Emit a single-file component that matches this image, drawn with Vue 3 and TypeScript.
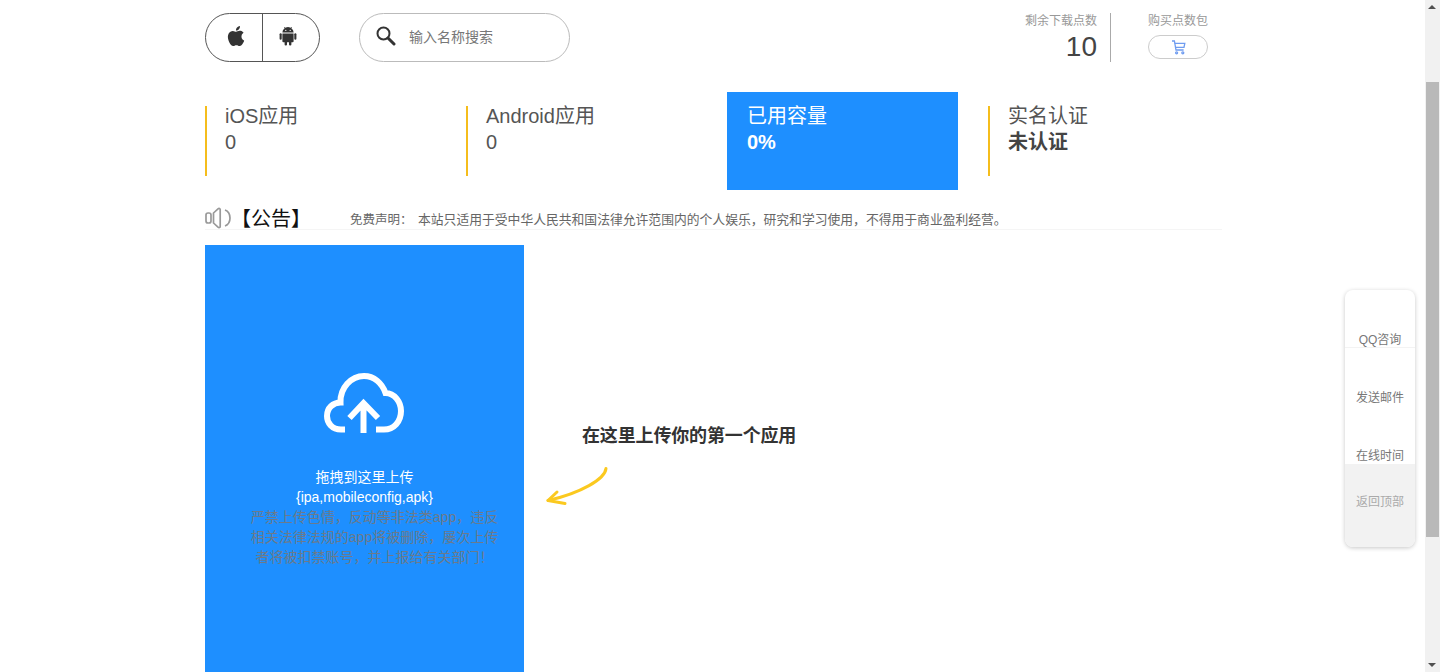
<script setup lang="ts">
interface Stat { title: string; value: string; active?: boolean; strong?: boolean }
const stats: Stat[] = [
  { title: 'iOS应用', value: '0' },
  { title: 'Android应用', value: '0' },
  { title: '已用容量', value: '0%', active: true, strong: true },
  { title: '实名认证', value: '未认证', strong: true },
]
</script>

<template>
  <div class="page">
    <main class="main">
      <div class="container">
        <header class="header">
          <div class="platforms">
            <button class="platform">
              <svg width="20" height="20" viewBox="0 0 24 24" fill="#333"><path d="M12.152 6.896c-.948 0-2.415-1.078-3.96-1.04-2.04.027-3.91 1.183-4.961 3.014-2.117 3.675-.546 9.103 1.519 12.09 1.013 1.454 2.208 3.09 3.792 3.039 1.52-.065 2.09-.987 3.935-.987 1.831 0 2.35.987 3.96.948 1.637-.026 2.676-1.48 3.676-2.948 1.156-1.688 1.636-3.325 1.662-3.415-.039-.013-3.182-1.221-3.22-4.857-.026-3.04 2.48-4.494 2.597-4.559-1.429-2.09-3.623-2.324-4.39-2.376-2-.156-3.675 1.09-4.61 1.09zM15.53 3.83c.843-1.012 1.4-2.427 1.245-3.83-1.207.052-2.662.805-3.532 1.818-.78.896-1.454 2.338-1.273 3.714 1.338.104 2.715-.688 3.559-1.701"/></svg>
            </button>
            <button class="platform platform-right">
              <svg width="18" height="20" viewBox="0 0 18 20" fill="#333">
                <path d="M3.4 6.6a5.6 5.6 0 0 1 11.2 0z"/>
                <path d="M5.4 1l1.2 2M12.6 1l-1.2 2" stroke="#333" stroke-width=".8"/>
                <circle cx="6.8" cy="4.4" r=".6" fill="#fff"/><circle cx="11.2" cy="4.4" r=".6" fill="#fff"/>
                <path d="M3.4 7.4h11.2v7.8a1 1 0 0 1-1 1H4.4a1 1 0 0 1-1-1z"/>
                <rect x="0.6" y="7.2" width="2.1" height="6.6" rx="1.05"/>
                <rect x="15.3" y="7.2" width="2.1" height="6.6" rx="1.05"/>
                <rect x="5.6" y="15" width="2.4" height="4.6" rx="1.1"/>
                <rect x="10" y="15" width="2.4" height="4.6" rx="1.1"/>
              </svg>
            </button>
          </div>
          <div class="search">
            <svg width="20" height="20" viewBox="0 0 20 20" fill="none" stroke="#333">
              <circle cx="7.500" cy="7.500" r="6" stroke-width="2"/>
              <path d="M12 12L18 18" stroke-width="3" stroke-linecap="round"/>
            </svg>
            <span class="search-text">输入名称搜索</span>
          </div>
          <div class="points">
            <span class="small-label">剩余下载点数</span>
            <span class="points-value">10</span>
          </div>
          <div class="buy">
            <span class="small-label">购买点数包</span>
            <button class="cart">
              <svg width="15" height="15" viewBox="0 0 15 15" fill="none" stroke="#6f9cf0" stroke-width="1.3">
                <path d="M1 1h2.400l1.600 9h7.600"/>
                <path d="M3.800 3.400h10l-.8 4H4.500"/>
                <circle cx="5.600" cy="12.800" r="1"/><circle cx="11.800" cy="12.800" r="1"/>
              </svg>
            </button>
          </div>
        </header>

        <section class="stats">
          <div v-for="s in stats" :key="s.title" class="stat" :class="{ active: s.active }">
            <div class="stat-body">
              <div class="stat-title">{{ s.title }}</div>
              <div class="stat-value" :class="{ strong: s.strong }">{{ s.value }}</div>
            </div>
          </div>
        </section>

        <section class="notice">
          <svg class="speaker" width="26" height="22" viewBox="0 0 26 22" fill="none" stroke="#999" stroke-width="1.700">
            <rect x="1" y="6" width="5" height="10" rx="2"/>
            <path d="M8.500 6L13 1.800c1-.8 2.200-.4 2.200.8v16.800c0 1.200-1.200 1.600-2.200.8L8.500 16z"/>
            <path d="M20 3c3.800 1.500 5 5 5 8s-1.200 6.500-5 8"/>
          </svg>
          <strong class="notice-title">【公告】</strong>
          <span class="notice-label">免费声明：</span>
          <span class="notice-text">本站只适用于受中华人民共和国法律允许范围内的个人娱乐，研究和学习使用，不得用于商业盈利经营。</span>
        </section>

        <section class="upload-row">
          <div class="upload">
            <svg class="cloud" width="80" height="60" viewBox="0 0 80 60" fill="none" stroke="#fff" stroke-width="6">
              <path d="M21 56.500H17C8 56.500 3 50 3 43 3 35 9 29.500 16.500 29.500 16 15 27 3 40 3 50 3 58 10 61.500 20 70.500 20 77 29 77 38 77 48.500 70 56.500 60 56.500H52"/>
              <path d="M39.500 60V29M25.500 45L39.500 30 54 45"/>
            </svg>
            <div class="upload-main">拖拽到这里上传</div>
            <div class="upload-main">{ipa,mobileconfig,apk}</div>
            <div class="upload-warn">严禁上传色情，反动等非法类app，违反相关法律法规的app将被删除，屡次上传者将被扣禁账号，并上报给有关部门！</div>
          </div>
          <div class="hint">
            <div class="hint-text">在这里上传你的第一个应用</div>
            <svg class="hint-arrow" width="66" height="42" viewBox="0 0 66 42" fill="none" stroke="#fbc91f" stroke-width="3" stroke-linecap="round" stroke-linejoin="round">
              <path d="M61 3.500C60 14 36 28 3 35.500"/>
              <path d="M12 27L3 35.500 20 38.500"/>
            </svg>
          </div>
        </section>
      </div>
    </main>

    <div class="scrollbar">
      <span class="arrow-up"></span>
      <div class="track"><div class="thumb"></div></div>
      <span class="arrow-down"></span>
    </div>

    <aside class="side">
      <div class="side-item side-qq">QQ咨询</div>
      <div class="side-item">发送邮件</div>
      <div class="side-item">在线时间</div>
      <div class="side-top">返回顶部</div>
    </aside>
  </div>
</template>

<style>
html, body { margin: 0; height: 100%; overflow: hidden; background: #fff; }
</style>

<style scoped>
.page {
  position: relative;
  display: flex;
  width: 1440px;
  height: 672px;
  overflow: hidden;
  font-family: "Liberation Sans", "Noto Sans CJK SC", sans-serif;
  color: #333;
}
.main { flex: 1; min-width: 0; }
.container { width: 1017px; margin-left: 205px; }

.header { display: flex; align-items: flex-start; padding-top: 13px; height: 49px; }
.platforms {
  display: flex;
  width: 115px;
  height: 49px;
  box-sizing: border-box;
  border: 1px solid #555;
  border-radius: 25px;
}
.platform {
  flex: 0 0 56px;
  display: flex;
  align-items: center;
  justify-content: center;
  padding: 0 0 3px 4px;
  border: 0;
  background: none;
}
.platform-right { flex: 1; padding: 0 6px 3px 0; border-left: 1px solid #555; }
.search {
  display: flex;
  align-items: center;
  gap: 13px;
  width: 211px;
  height: 49px;
  box-sizing: border-box;
  margin-left: 39px;
  padding: 0 0 3px 16px;
  border: 1px solid #bbb;
  border-radius: 25px;
}
.search-text { font-size: 14px; color: #777; }
.points {
  display: flex;
  flex-direction: column;
  align-items: flex-end;
  width: 71px;
  margin-left: 456px;
  height: 49px;
  padding-right: 13px;
  border-right: 1px solid #aaa;
}
.small-label { font-size: 12px; line-height: 14px; margin-top: 1px; color: #999; white-space: nowrap; }
.points-value { font-size: 28px; line-height: 32px; margin-top: 3px; color: #444; }
.buy { display: flex; flex-direction: column; margin-left: 37px; width: 60px; }
.cart {
  display: flex;
  align-items: center;
  justify-content: center;
  width: 60px;
  height: 24px;
  margin-top: 7px;
  padding: 0;
  background: #fff;
  border: 1px solid #ccc;
  border-radius: 12px;
}

.stats { display: flex; gap: 30px; margin-top: 30px; }
.stat { display: flex; align-items: flex-start; width: 231px; height: 98px; box-sizing: border-box; padding-top: 14px; }
.stat-body { width: 100%; height: 70px; box-sizing: border-box; padding-left: 18px; border-left: 2px solid #f5bd1c; }
.stat-title { font-size: 20px; line-height: 20px; color: #555; }
.stat-value { font-size: 20px; line-height: 20px; margin-top: 6px; color: #555; }
.stat-value.strong { font-weight: 700; color: #444; }
.stat.active { background: #1e8fff; }
.stat.active .stat-body { border-left-color: transparent; }
.stat.active .stat-title, .stat.active .stat-value { color: #fff; }

.notice {
  display: flex;
  align-items: center;
  height: 40px;
  box-sizing: border-box;
  border-bottom: 1px solid #f5f5f5;
  padding-top: 16px;
}
.speaker { flex: none; }
.notice-title { font-size: 20px; font-weight: 400; color: #111; width: 119px; flex: none; margin-bottom: 1px; }
.notice-label { font-size: 12.500px; color: #666; width: 68px; flex: none; padding-top: 2px; }
.notice-text { font-size: 12.800px; color: #666; padding-top: 2px; }

.upload-row { display: flex; margin-top: 15px; }
.upload {
  flex: none;
  width: 319px;
  height: 440px;
  box-sizing: border-box;
  padding-top: 128px;
  background: #1e8fff;
  text-align: center;
}
.cloud { display: block; margin: 0 auto 34px; transform: translateX(-1px); }
.upload-main { font-size: 14px; line-height: 20px; color: #fff; }
.upload-warn { width: 250px; margin: 0 auto; padding-left: 20px; font-size: 14px; line-height: 20px; color: #6c7a8a; opacity: .99; }
.hint { display: flex; flex-direction: column; margin-left: 58px; padding-top: 179px; }
.hint-text { font-size: 18px; line-height: 24px; font-weight: 700; letter-spacing: -.15px; color: #333; }
.hint-arrow { display: block; margin: 17px 0 0 -37px; }

.scrollbar {
  flex: none;
  width: 15px;
  display: flex;
  flex-direction: column;
  background: #f1f1f1;
  position: relative;
}
.track { flex: 1; padding-top: 82px; }
.thumb { width: 13px; height: 455px; margin-left: 1px; background: #b9b9b9; }
.arrow-up, .arrow-down {
  position: absolute;
  left: 3px;
  width: 0;
  height: 0;
  border-left: 4px solid transparent;
  border-right: 4px solid transparent;
}
.arrow-up { top: 5px; border-bottom: 4px solid #505050; }
.arrow-down { bottom: 5px; border-top: 4px solid #505050; }

.side {
  position: absolute;
  left: 1345px;
  top: 290px;
  width: 70px;
  height: 257px;
  display: flex;
  flex-direction: column;
  background: #fff;
  border-radius: 8px;
  overflow: hidden;
  box-shadow: 0 1px 4px rgba(0, 0, 0, .22);
}
.side-item {
  height: 58px;
  box-sizing: border-box;
  padding-top: 42px;
  text-align: center;
  font-size: 12px;
  line-height: 16px;
  color: #777;
  flex: none;
}
.side-qq { border-bottom: 1px solid #f3f3f3; }
.side-top {
  flex: 1;
  display: flex;
  align-items: center;
  justify-content: center;
  padding-bottom: 10px;
  font-size: 12px;
  color: #aaa;
  background: #f2f2f2;
}
</style>
